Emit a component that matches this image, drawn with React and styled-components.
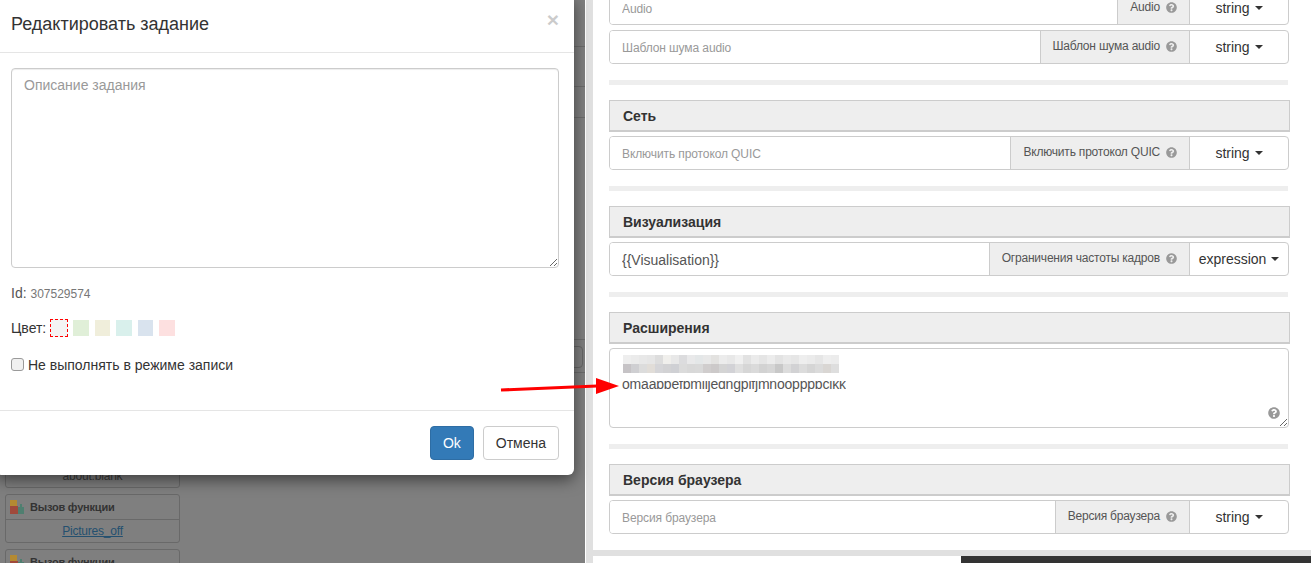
import React from 'react';
import styled, { createGlobalStyle } from 'styled-components';
import { FaQuestionCircle } from 'react-icons/fa';

const GlobalStyle = createGlobalStyle`
  html, body {
    margin: 0;
    padding: 0;
    height: 100%;
    overflow: hidden;
    background: #fff;
    font-family: "Liberation Sans", Arial, sans-serif;
    font-size: 14px;
    color: #333;
  }
  * { box-sizing: border-box; }
`;

const Page = styled.div`
  position: relative;
  display: flex;
  width: 1311px;
  height: 563px;
  overflow: hidden;
`;

/* dimmed page behind the dialog */
const Backdrop = styled.div`
  width: 585px;
  flex: none;
  display: flex;
  flex-direction: column;
  background: #7f7f7f;
  overflow: hidden;
`;

const BackRow = styled.div`
  height: ${p => p.$h}px;
  flex: none;
  display: flex;
  align-items: flex-end;
  justify-content: flex-end;
  padding: 0 0 4px;
  border-bottom: 1px solid #6c6c6c;
`;

const BackButton = styled.div`
  width: 30px;
  height: 22px;
  margin-right: 2px;
  border: 1px solid #666;
  border-radius: 4px;
`;

const Cards = styled.div`
  margin: 66px 0 0 5px;
  width: 175px;
  display: flex;
  flex-direction: column;
  gap: 6px;
`;

const Card = styled.div`
  flex: none;
  height: 49px;
  border: 1px solid #696969;
  border-radius: 3px;
  font-size: 12px;
`;

const CardHead = styled.div`
  height: 25px;
  display: flex;
  align-items: center;
  gap: 5px;
  padding-left: 4px;
  font-size: 11px;
  font-weight: bold;
  letter-spacing: -0.2px;
  color: #333;
  border-bottom: 1px solid #696969;
`;

const CardLink = styled.div`
  height: 22px;
  line-height: 22px;
  text-align: center;
  letter-spacing: -0.2px;
  color: ${p => (p.$link ? '#24506f' : '#3c3c3c')};
  text-decoration: ${p => (p.$link ? 'underline' : 'none')};
`;

/* dialog */
const Modal = styled.div`
  position: absolute;
  left: -4px;
  top: -5px;
  width: 578px;
  height: 480px;
  display: flex;
  flex-direction: column;
  background: #fff;
  border-radius: 6px;
  box-shadow: 0 5px 15px rgba(0, 0, 0, 0.5);
`;

const ModalHeader = styled.div`
  height: 58px;
  flex: none;
  display: flex;
  align-items: center;
  justify-content: space-between;
  padding: 1px 15px 0;
  border-bottom: 1px solid #e5e5e5;
`;

const ModalTitle = styled.h4`
  margin: 0;
  font-size: 18px;
  font-weight: normal;
  color: #333;
`;

const CloseMark = styled.span`
  font-size: 21px;
  font-weight: bold;
  line-height: 1;
  color: #000;
  opacity: 0.2;
  margin-top: -9px;
`;

const ModalBody = styled.div`
  flex: 1;
  display: flex;
  flex-direction: column;
  padding: 15px 15px 0;
`;

const Description = styled.textarea`
  display: block;
  width: 100%;
  height: 200px;
  flex: none;
  padding: 6px 12px;
  border: 1px solid #ccc;
  border-radius: 4px;
  font: 14px/20px "Liberation Sans", Arial, sans-serif;
  color: #555;
  resize: vertical;
  outline: none;
  box-shadow: inset 0 1px 1px rgba(0, 0, 0, 0.075);
  &::placeholder { color: #999; opacity: 1; }
`;

const IdLine = styled.div`
  margin-top: 15px;
  height: 20px;
  line-height: 20px;
  color: #555;
  span { font-size: 12px; color: #777; }
`;

const ColorLine = styled.div`
  margin-top: 15px;
  height: 20px;
  display: flex;
  align-items: center;
  gap: 6px;
  span { margin-right: -2px; }
`;

const Swatch = styled.div`
  width: ${p => (p.$active ? 18 : 15.5)}px;
  height: ${p => (p.$active ? 18 : 16)}px;
  margin-right: ${p => (p.$active ? -1 : 0)}px;
  background: ${p => p.$color};
  border: ${p => (p.$active ? '1px dashed #f00' : 'none')};
`;

const CheckLine = styled.label`
  margin-top: 17px;
  height: 20px;
  display: flex;
  align-items: center;
  gap: 4px;
`;

const CheckBox = styled.input`
  appearance: none;
  margin: 0 0 2px;
  width: 13px;
  height: 13px;
  background: #f0f0f0;
  border: 1px solid #9a9a9a;
  border-radius: 3px;
`;

const ModalFooter = styled.div`
  height: 65px;
  flex: none;
  display: flex;
  justify-content: flex-end;
  align-items: center;
  gap: 9px;
  padding: 0 15px;
  border-top: 1px solid #e5e5e5;
`;

const Button = styled.button`
  height: 34px;
  padding: 6px 12px;
  font: 14px/20px "Liberation Sans", Arial, sans-serif;
  border-radius: 4px;
  border: 1px solid ${p => (p.$primary ? '#2e6da4' : '#ccc')};
  background: ${p => (p.$primary ? '#337ab7' : '#fff')};
  color: ${p => (p.$primary ? '#fff' : '#333')};
`;

/* settings form on the right */
const Pane = styled.div`
  flex: 1;
  min-width: 0;
  margin-left: 1px;
  display: flex;
  flex-direction: column;
  border-left: 7px solid #e0e0e0;
  background: #fff;
`;

const Form = styled.div`
  height: 550px;
  flex: none;
  padding: 0 22px 0 16px;
  overflow: hidden;
`;

const Fields = styled.div`
  margin-top: ${p => p.$offset || 0}px;
  display: flex;
  flex-direction: column;
  gap: 5px;
`;

const SectionRule = styled.div`
  height: 5px;
  width: 679px;
  margin: 16px 0 15px;
  background: #eee;
`;

const SectionHeader = styled.div`
  height: 32px;
  width: 681px;
  margin-bottom: 4px;
  display: flex;
  align-items: center;
  padding-left: 13px;
  font-weight: bold;
  color: #333;
  background: #eee;
  border: 1px solid #ccc;
  border-width: 1px 1px 2px 1px;
`;

const FieldRow = styled.div`
  display: flex;
  height: 34px;
  width: 680px;
  border: 1px solid #ccc;
  border-radius: 4px;
  overflow: hidden;
`;

const FieldInput = styled.input`
  flex: 1;
  min-width: 0;
  padding: 1px 12px 0;
  border: none;
  outline: none;
  font: ${p => (p.$filled ? 14 : 12)}px "Liberation Sans", Arial, sans-serif;
  letter-spacing: ${p => (p.$filled ? 0 : -0.1)}px;
  color: #555;
  &::placeholder { color: #999; opacity: 1; }
`;

const FieldLabel = styled.div`
  flex: none;
  display: flex;
  align-items: center;
  gap: 6px;
  padding: 0 12px 2px;
  font-size: 12px;
  letter-spacing: -0.2px;
  color: #555;
  background: #eee;
  border-left: 1px solid #ccc;
  border-right: 1px solid #ccc;
  svg { color: #999; margin-top: 1px; }
`;

const TypeSelect = styled.div`
  flex: none;
  width: 98px;
  display: flex;
  align-items: center;
  justify-content: center;
  gap: 5px;
  color: #333;
`;

const Caret = styled.span`
  width: 0;
  height: 0;
  border-top: 4px solid #333;
  border-left: 4px solid transparent;
  border-right: 4px solid transparent;
`;

const ExtensionsBox = styled.div`
  position: relative;
  width: 680px;
  height: 80px;
`;

const ExtensionsArea = styled.textarea`
  display: block;
  width: 100%;
  height: 100%;
  border: 1px solid #ccc;
  border-radius: 4px;
  outline: none;
  resize: vertical;
`;

const Mosaic = styled.div`
  position: absolute;
  left: 14px;
  top: 7px;
  display: grid;
  grid-template-columns: repeat(27, 8px);
  grid-auto-rows: 9px;
`;

const MosaicCell = styled.div`
  background: ${p => p.$shade};
`;

const ClippedText = styled.div`
  position: absolute;
  left: 13px;
  top: 33px;
  height: 11px;
  overflow: hidden;
  line-height: 7px;
  font-size: 14px;
  letter-spacing: -0.2px;
  white-space: nowrap;
  color: #555;
`;

const HelpSpot = styled.span`
  position: absolute;
  right: 9px;
  bottom: 9px;
  display: flex;
  color: #999;
`;

const BottomBand = styled.div`
  flex: 1;
  display: flex;
  justify-content: flex-end;
  border-top: 6px solid #e0e0e0;
`;

const DarkBlock = styled.div`
  width: 350px;
  background: #333;
`;

const Arrow = styled.svg`
  position: absolute;
  left: 495px;
  top: 370px;
`;

const PuzzleIcon = () => (
  <svg width="15" height="15" viewBox="0 0 15 15">
    <rect x="0" y="0" width="7" height="6" fill="#b48a32" />
    <rect x="0" y="6" width="8" height="8" fill="#a04a3c" />
    <rect x="8" y="7" width="6" height="7" fill="#4f7f70" />
    <rect x="10" y="4" width="2" height="3" fill="#4f7f70" />
  </svg>
);

const Help = ({ size = 11 }) => <FaQuestionCircle size={size} />;

const Field = ({ placeholder, value, label, type = 'string' }) => (
  <FieldRow>
    <FieldInput placeholder={placeholder} defaultValue={value} $filled={!!value} />
    <FieldLabel>{label} <Help /></FieldLabel>
    <TypeSelect>{type} <Caret /></TypeSelect>
  </FieldRow>
);

const mosaicRows = [
  ['#eee', '#ebebeb', '#e8e8e8', '#e6e6e6', '#ddd', '#f0efec', '#e8e8e8', '#dcdcde', '#e9e9ea', '#e4e7e8', '#e8e8e8', '#e3e2e0', '#ececec', '#e8e8e8', '#f0f0f0', '#e2e2e2', '#ebebeb', '#e5e5e5', '#ececec', '#e3e3e3', '#e9e9e9', '#e6e6e6', '#eee', '#ebebeb', '#e6e6e6', '#eee', '#ececec'],
  ['#c6c3c6', '#cfcfd2', '#dcdcdc', '#e1ddd8', '#d5d5d8', '#d2d2d4', '#cfd0d4', '#dbdbdb', '#d8d8d8', '#d9d9d9', '#d0cdcd', '#ccc9c9', '#d4d4d4', '#d2d2d6', '#dfdfdf', '#d6d6d6', '#dadada', '#d2d2d2', '#d6d6d6', '#c8c8c8', '#dcdcdc', '#d2d2d4', '#dcdcdc', '#d5d5d5', '#dbdbdb', '#d9d6d3', '#dedede'],
];

const swatches = ['#e0efd8', '#f0eedb', '#d9f0ec', '#d9e3ee', '#fde0e0'];

export default function App() {
  return (
    <Page>
      <GlobalStyle />
      <Backdrop>
        <BackRow $h={47} />
        <BackRow $h={40} />
        <BackRow $h={31} />
        <BackRow $h={222} />
        <BackRow $h={33}><BackButton /></BackRow>
        <Cards>
          <Card>
            <CardHead />
            <CardLink>about:blank</CardLink>
          </Card>
          <Card>
            <CardHead><PuzzleIcon />Вызов функции</CardHead>
            <CardLink $link>Pictures_off</CardLink>
          </Card>
          <Card>
            <CardHead><PuzzleIcon />Вызов функции</CardHead>
          </Card>
        </Cards>
      </Backdrop>

      <Pane>
        <Form>
          <Fields $offset={-9}>
            <Field placeholder="Audio" label="Audio" />
            <Field placeholder="Шаблон шума audio" label="Шаблон шума audio" />
          </Fields>
          <SectionRule />
          <SectionHeader>Сеть</SectionHeader>
          <Field placeholder="Включить протокол QUIC" label="Включить протокол QUIC" />
          <SectionRule />
          <SectionHeader>Визуализация</SectionHeader>
          <Field value="{{Visualisation}}" label="Ограничения частоты кадров" type="expression" />
          <SectionRule />
          <SectionHeader>Расширения</SectionHeader>
          <ExtensionsBox>
            <ExtensionsArea />
            <Mosaic>
              {mosaicRows.flat().map((shade, i) => <MosaicCell key={i} $shade={shade} />)}
            </Mosaic>
            <ClippedText>omaabbefbmiljedngpifjmnoopppbcikk</ClippedText>
            <HelpSpot><Help size={12} /></HelpSpot>
          </ExtensionsBox>
          <SectionRule />
          <SectionHeader>Версия браузера</SectionHeader>
          <Field placeholder="Версия браузера" label="Версия браузера" />
        </Form>
        <BottomBand><DarkBlock /></BottomBand>
      </Pane>

      <Modal>
        <ModalHeader>
          <ModalTitle>Редактировать задание</ModalTitle>
          <CloseMark>×</CloseMark>
        </ModalHeader>
        <ModalBody>
          <Description placeholder="Описание задания" />
          <IdLine>Id: <span>307529574</span></IdLine>
          <ColorLine>
            <span>Цвет:</span>
            <Swatch $active $color="#f4f4f4" />
            {swatches.map(c => <Swatch key={c} $color={c} />)}
          </ColorLine>
          <CheckLine>
            <CheckBox type="checkbox" />
            Не выполнять в режиме записи
          </CheckLine>
        </ModalBody>
        <ModalFooter>
          <Button $primary>Ok</Button>
          <Button>Отмена</Button>
        </ModalFooter>
      </Modal>

      <Arrow width="130" height="30" viewBox="0 0 130 30">
        <line x1="6" y1="20" x2="102" y2="16" stroke="#f00" strokeWidth="3" />
        <polygon points="101,8 124,16 101,24" fill="#f00" />
      </Arrow>
    </Page>
  );
}
